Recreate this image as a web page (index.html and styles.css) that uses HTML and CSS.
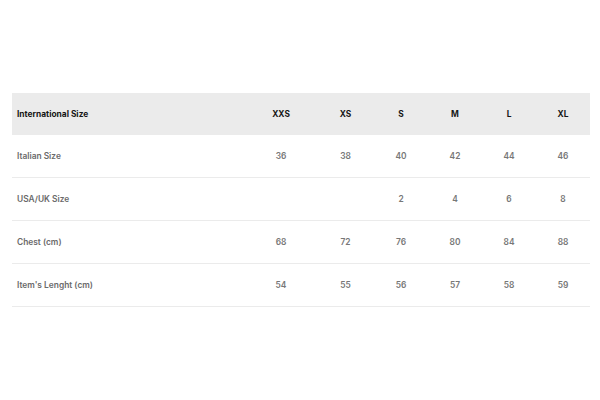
FILE: index.html
```html
<!DOCTYPE html>
<html lang="en">
<head>
<meta charset="utf-8">
<title>Size Guide</title>
<link rel="stylesheet" href="styles.css">
</head>
<body>
<div class="page">
  <div class="size-table">
    <div class="row head">
      <div class="label">International Size</div>
      <div class="cell">XXS</div><div class="cell">XS</div><div class="cell">S</div><div class="cell">M</div><div class="cell">L</div><div class="cell">XL</div>
    </div>
    <div class="row">
      <div class="label">Italian Size</div>
      <div class="cell">36</div><div class="cell">38</div><div class="cell">40</div><div class="cell">42</div><div class="cell">44</div><div class="cell">46</div>
    </div>
    <div class="row">
      <div class="label">USA/UK Size</div>
      <div class="cell"></div><div class="cell"></div><div class="cell">2</div><div class="cell">4</div><div class="cell">6</div><div class="cell">8</div>
    </div>
    <div class="row">
      <div class="label">Chest (cm)</div>
      <div class="cell">68</div><div class="cell">72</div><div class="cell">76</div><div class="cell">80</div><div class="cell">84</div><div class="cell">88</div>
    </div>
    <div class="row">
      <div class="label">Item's Lenght (cm)</div>
      <div class="cell">54</div><div class="cell">55</div><div class="cell">56</div><div class="cell">57</div><div class="cell">58</div><div class="cell">59</div>
    </div>
  </div>
</div>
</body>
</html>
```
FILE: styles.css
```css
html, body {
  margin: 0;
  padding: 0;
  background: #ffffff;
}
.page {
  padding: 93px 10px 0 12px;
  font-family: Inter, "Liberation Sans", sans-serif;
  font-size: 8.4px;
}
.size-table {
  width: 578px;
}
.row {
  display: grid;
  grid-template-columns: 233px 72px 57px 54px 54px 54px 54px;
  align-items: center;
  height: 42px;
  border-bottom: 1px solid #ebebeb;
  color: #777777;
  font-weight: 600;
}
.row.head {
  background: #ebebeb;
  border-bottom: none;
  color: #161616;
  font-weight: 700;
}
.label {
  padding-left: 5px;
  color: #6a6a6a;
}
.head .label {
  color: #161616;
}
.cell {
  text-align: center;
}
```
